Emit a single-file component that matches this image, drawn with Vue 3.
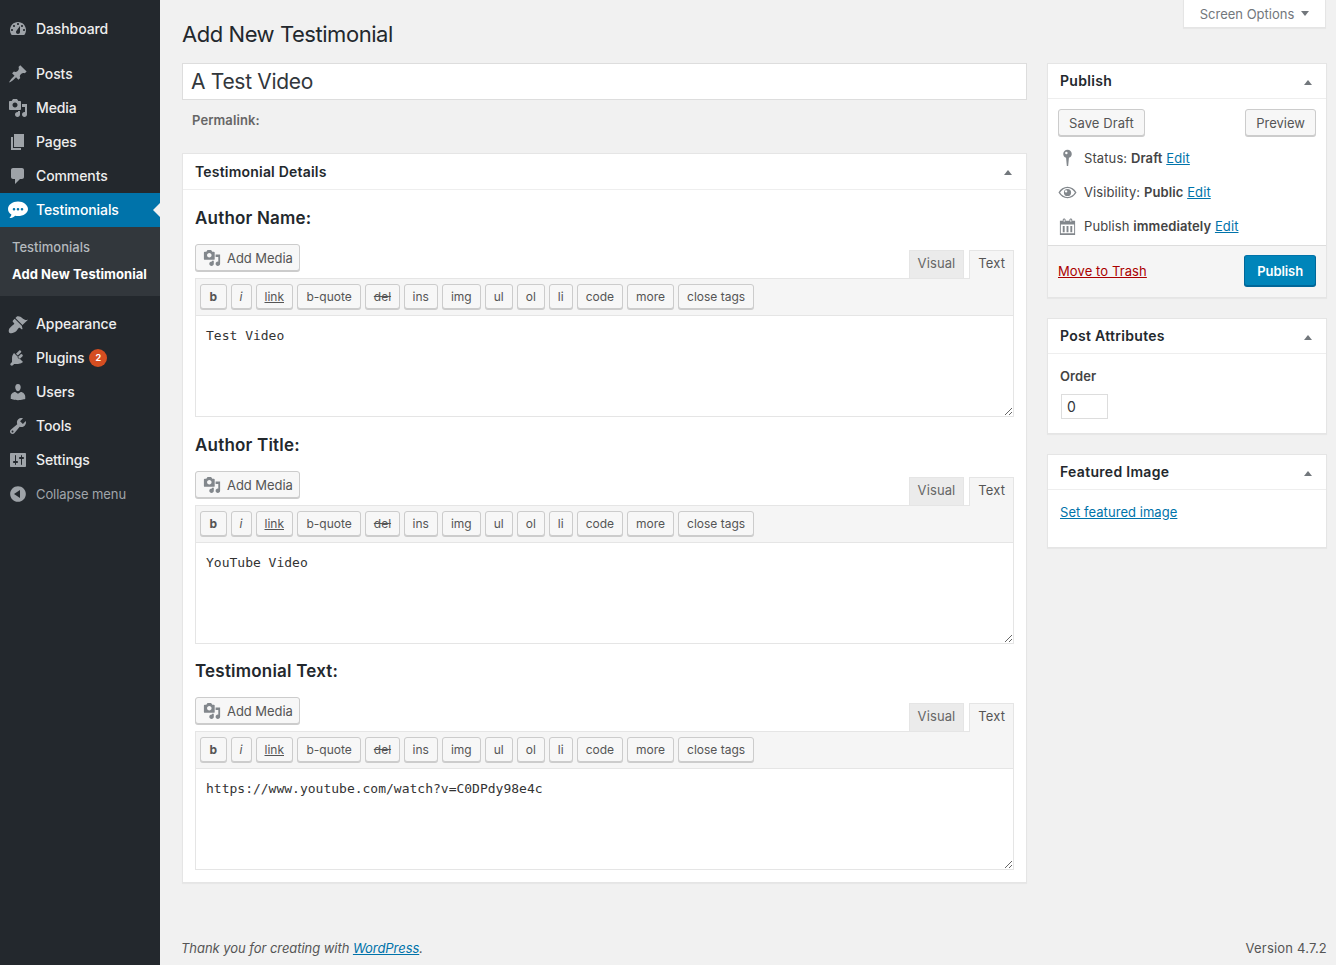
<template>
    <div class="page">
        <aside class="sidebar">
            <ul class="menu">
                <template v-for="item in menuItems" :key="item.label">
                    <li class="menu-item" :class="{ current: item.sub, 'after-gap': item.gap }">
                        <svg class="menu-icon" viewBox="0 0 20 20">
                            <path :d="item.icon" fill-rule="evenodd" />
                        </svg>
                        <span class="menu-label">{{ item.label }}</span>
                        <span v-if="item.badge" class="badge">{{ item.badge }}</span>
                        <span v-if="item.sub" class="arrow"></span>
                    </li>
                    <li v-if="item.sub" class="submenu">
                        <div v-for="sub in item.sub" :key="sub.label" class="sub-item" :class="{ active: sub.active }">{{ sub.label }}</div>
                    </li>
                </template>
            </ul>
            <div class="collapse">
                <svg class="menu-icon" viewBox="0 0 20 20">
                    <path :d="icons.collapse" fill-rule="evenodd" />
                </svg>
                <span>Collapse menu</span>
            </div>
        </aside>

        <main class="content">
            <div class="screen-options">
                <span>Screen Options</span>
                <span class="down"></span>
            </div>

            <h1>Add New Testimonial</h1>

            <div class="columns">
                <div class="left">
                    <input class="title-input" type="text" value="A Test Video" />
                    <div class="permalink">Permalink:</div>

                    <section class="box">
                        <header class="box-head">
                            <h2>Testimonial Details</h2>
                            <span class="up"></span>
                        </header>
                        <div class="details">
                            <div v-for="field in fields" :key="field.label" class="field">
                                <h3>{{ field.label }}</h3>
                                <div class="editor-top">
                                    <button class="btn add-media">
                                        <svg class="media-icon" viewBox="0 0 20 20">
                                            <path :d="icons.media" fill-rule="evenodd" />
                                        </svg>
                                        Add Media
                                    </button>
                                    <div class="tabs">
                                        <span class="tab">Visual</span>
                                        <span class="tab active">Text</span>
                                    </div>
                                </div>
                                <div class="toolbar">
                                    <button v-for="tag in tags" :key="tag.name" class="btn tag" :class="tag.cls">{{ tag.name }}</button>
                                </div>
                                <textarea class="editor-text" :value="field.value" spellcheck="false"></textarea>
                            </div>
                        </div>
                    </section>
                </div>

                <div class="right">
                    <section class="box publish">
                        <header class="box-head">
                            <h2>Publish</h2>
                            <span class="up"></span>
                        </header>
                        <div class="publish-buttons">
                            <button class="btn">Save Draft</button>
                            <button class="btn preview">Preview</button>
                        </div>
                        <div class="pub-row">
                            <svg class="pub-icon" viewBox="0 0 20 20"><path :d="icons.pin" fill-rule="evenodd" /></svg>
                            <span>Status: <b>Draft</b> <a>Edit</a></span>
                        </div>
                        <div class="pub-row">
                            <svg class="pub-icon" viewBox="0 0 20 20"><path :d="icons.eye" fill-rule="evenodd" /></svg>
                            <span>Visibility: <b>Public</b> <a>Edit</a></span>
                        </div>
                        <div class="pub-row">
                            <svg class="pub-icon" viewBox="0 0 20 20"><path :d="icons.calendar" fill-rule="evenodd" /></svg>
                            <span>Publish <b>immediately</b> <a>Edit</a></span>
                        </div>
                        <div class="pub-actions">
                            <a class="trash">Move to Trash</a>
                            <button class="btn primary">Publish</button>
                        </div>
                    </section>

                    <section class="box">
                        <header class="box-head">
                            <h2>Post Attributes</h2>
                            <span class="up"></span>
                        </header>
                        <div class="attrs">
                            <strong>Order</strong>
                            <input class="order" type="text" value="0" />
                        </div>
                    </section>

                    <section class="box">
                        <header class="box-head">
                            <h2>Featured Image</h2>
                            <span class="up"></span>
                        </header>
                        <div class="featured">
                            <a>Set featured image</a>
                        </div>
                    </section>
                </div>
            </div>

            <footer class="footer">
                <em>Thank you for creating with <a>WordPress</a>.</em>
                <span>Version 4.7.2</span>
            </footer>
        </main>
    </div>
</template>

<script setup>
const icons = {
    dashboard: 'M3.76 16h12.48c1.1-1.37 1.76-3.11 1.76-5 0-4.42-3.58-8-8-8s-8 3.58-8 8c0 1.89.66 3.63 1.76 5zM10 4c.55 0 1 .45 1 1s-.45 1-1 1-1-.45-1-1 .45-1 1-1zM6 6c.55 0 1 .45 1 1s-.45 1-1 1-1-.45-1-1 .45-1 1-1zm8 0c.55 0 1 .45 1 1s-.45 1-1 1-1-.45-1-1 .45-1 1-1zm-5.37 5.55L12 7v6c0 1.1-.9 2-2 2s-2-.9-2-2c0-.57.24-1.08.63-1.45zM4 10c.55 0 1 .45 1 1s-.45 1-1 1-1-.45-1-1 .45-1 1-1zm12 0c.55 0 1 .45 1 1s-.45 1-1 1-1-.45-1-1 .45-1 1-1z',
    posts: 'M10.44 3.02l1.82-1.82 6.36 6.35-1.83 1.82c-1.05-.68-2.48-.57-3.41.36l-.75.75c-.92.93-1.04 2.35-.35 3.41l-1.83 1.82-2.41-2.41-2.8 2.79c-.42.42-3.38 2.71-3.8 2.29s1.86-3.39 2.28-3.81l2.79-2.79L4.1 9.36l1.83-1.82c1.05.69 2.48.57 3.4-.36l.75-.75c.93-.92 1.05-2.35.36-3.41z',
    media: 'M13 11V4c0-.55-.45-1-1-1h-1.67L9 1H5L3.67 3H2c-.55 0-1 .45-1 1v7c0 .55.45 1 1 1h10c.55 0 1-.45 1-1zM7 4.500c1.38 0 2.500 1.120 2.500 2.500S8.380 9.500 7 9.500 4.500 8.380 4.500 7 5.620 4.500 7 4.500zM14 6h5v10.500c0 1.380-1.120 2.500-2.500 2.500S14 17.880 14 16.500s1.120-2.500 2.500-2.500c.17 0 .34.020.5.050V9h-3V6zm-4 8.050V13h2v3.500c0 1.380-1.120 2.500-2.500 2.500S7 17.880 7 16.500 8.120 14 9.500 14c.17 0 .34.020.5.050z',
    pages: 'M6 15V2h10v13H6zm-1 1h8v2H3V5h2v11z',
    comments: 'M5 2h9c1.100 0 2 .9 2 2v7c0 1.100-.9 2-2 2h-2l-5 5v-5H5c-1.100 0-2-.9-2-2V4c0-1.100.9-2 2-2z',
    chat: 'M10 1.500C4.500 1.500 0 4.900 0 9c0 2.300 1.300 4.200 3.400 5.600-.2 1.300-.9 2.500-2 3.500 2.300 0 4.300-.9 5.700-2.300.9.2 1.900.3 2.900.3 5.500 0 10-3.200 10-7.100S15.500 1.500 10 1.500zM6 7.900a1.300 1.300 0 1 1 0 2.600 1.300 1.300 0 0 1 0-2.600zm4 0a1.300 1.300 0 1 1 0 2.600 1.300 1.300 0 0 1 0-2.600zm4 0a1.300 1.300 0 1 1 0 2.600 1.300 1.300 0 0 1 0-2.600z',
    appearance: 'M14.480 11.060L7.410 3.990l1.500-1.500c.5-.56 2.300-.47 3.510.32 1.210.8 1.430 1.280 2.910 2.100 1.180.64 2.450 1.260 4.670.85l-5.520 5.300zM13.770 11.770L6.700 4.700 4.930 6.470c-.39.39-.39 1.020 0 1.410l1.060 1.060c.39.39.39 1.030 0 1.420-.6.6-1.430 1.110-2.210 1.690-.35.26-.7.53-1.010.84C1.430 13.710 0 16.330 1.300 18.700c2.370 1.300 5-.13 6.840-1.470.31-.31.580-.66.84-1.010.58-.78 1.090-1.610 1.690-2.210.39-.39 1.030-.39 1.420 0l1.060 1.060c.39.39 1.020.39 1.410 0z',
    plugins: 'M13.110 4.360L9.870 7.600 8 5.730l3.240-3.240c.35-.34 1.050-.2 1.560.32.520.51.660 1.210.310 1.550zM5.110 6.130l.910-1.120 9.010 9.010-1.190.84c-.710.710-2.630 1.160-3.820 1.160H6.140L4.900 17.260c-.59.59-1.540.59-2.120 0-.590-.58-.590-1.530 0-2.120l1.240-1.240v-3.880c0-1.130.46-3.050 1.170-3.770zM12.740 6.260L9.500 9.500l1.870 1.870 3.240-3.240c.35-.35.2-1.050-.32-1.560-.51-.52-1.210-.66-1.550-.31z',
    users: 'M10 9.250c-2.270 0-2.730-3.440-2.730-3.440C7 4.020 7.820 2 9.970 2c2.160 0 2.980 2.020 2.710 3.810 0 0-.41 3.440-2.680 3.440zm0 2.570L12.720 10c2.390 0 4.520 2.330 4.520 4.530v2.490s-3.650 1.130-7.240 1.130c-3.650 0-7.240-1.130-7.240-1.130v-2.490c0-2.250 1.940-4.480 4.470-4.480z',
    tools: 'M16.680 9.770c-1.340 1.340-3.300 1.670-4.950.99l-5.410 6.520c-.99.99-2.590.99-3.580 0s-.99-2.590 0-3.570l6.520-5.420c-.68-1.650-.35-3.610.99-4.950 1.280-1.280 3.120-1.620 4.720-1.060l-2.890 2.890 2.820 2.820 2.860-2.870c.53 1.580.18 3.390-1.080 4.650zM3.810 16.210c.4.39 1.030.39 1.420 0 .4-.4.4-1.030 0-1.430-.39-.39-1.020-.39-1.420 0-.39.4-.39 1.030 0 1.430z',
    settings: 'M18 16V4c0-.55-.45-1-1-1H3c-.55 0-1 .45-1 1v12c0 .55.45 1 1 1h14c.55 0 1-.45 1-1zM8 11h1c.55 0 1 .45 1 1s-.45 1-1 1H8v1.500c0 .28-.22.5-.5.5s-.5-.22-.5-.5V13H6c-.55 0-1-.45-1-1s.45-1 1-1h1V5.500c0-.28.22-.5.5-.5s.5.22.5.5V11zm5-2h-1c-.55 0-1-.45-1-1s.45-1 1-1h1V5.500c0-.28.22-.5.5-.5s.5.22.5.5V7h1c.55 0 1 .45 1 1s-.45 1-1 1h-1v5.500c0 .28-.22.5-.5.5s-.5-.22-.5-.5V9z',
    collapse: 'M10 2.160c4.330 0 7.840 3.510 7.840 7.840s-3.510 7.840-7.840 7.840S2.160 14.330 2.160 10 5.670 2.160 10 2.160zM12 14V6l-6 4z',
    pin: 'M10 .8C7.500.8 5.500 2.800 5.500 5.200c0 1.900 1.200 3.500 3 4.100L9.300 18h1.400l.8-8.700c1.800-.6 3-2.200 3-4.100C14.500 2.800 12.500.8 10 .8zM8.800 2.800a1.300 1.300 0 1 1 0 2.600 1.300 1.300 0 0 1 0-2.600z',
    eye: 'M10 4C6 4 2.600 6.400.5 10c2.100 3.600 5.500 6 9.500 6s7.400-2.400 9.500-6C17.400 6.400 14 4 10 4zM10 5.200c3.100 0 5.900 1.800 7.800 4.800-1.900 3-4.700 4.800-7.800 4.800S4.100 13 2.200 10C4.100 7 6.900 5.200 10 5.200zM10 6.200a3.800 3.800 0 1 0 0 7.600 3.800 3.800 0 0 0 0-7.600zM8.500 7.500a1.300 1.300 0 1 1 0 2.600 1.300 1.300 0 0 1 0-2.600z',
    calendar: 'M15 4h3v15H2V4h3V3c0-.83.67-1.500 1.500-1.500S8 2.170 8 3v1h4V3c0-.83.67-1.500 1.500-1.500S15 2.170 15 3v1zM6 5h1V3c0-.28-.22-.5-.5-.5S6 2.720 6 3v2zm7 0h1V3c0-.28-.22-.5-.5-.5S13 2.720 13 3v2zm4 12V8H3v9h14zM5 9.500h2V16H5V9.500zm4 0h2V16H9V9.500zm4 0h2V16h-2V9.500z'
}

const menuItems = [
    { label: 'Dashboard', icon: icons.dashboard },
    { label: 'Posts', icon: icons.posts, gap: true },
    { label: 'Media', icon: icons.media },
    { label: 'Pages', icon: icons.pages },
    { label: 'Comments', icon: icons.comments },
    {
        label: 'Testimonials',
        icon: icons.chat,
        sub: [
            { label: 'Testimonials' },
            { label: 'Add New Testimonial', active: true }
        ]
    },
    { label: 'Appearance', icon: icons.appearance, gap: true },
    { label: 'Plugins', icon: icons.plugins, badge: '2' },
    { label: 'Users', icon: icons.users },
    { label: 'Tools', icon: icons.tools },
    { label: 'Settings', icon: icons.settings }
]

const fields = [
    { label: 'Author Name:', value: 'Test Video' },
    { label: 'Author Title:', value: 'YouTube Video' },
    { label: 'Testimonial Text:', value: 'https://www.youtube.com/watch?v=C0DPdy98e4c' }
]

const tags = [
    { name: 'b', cls: 'tag-b' },
    { name: 'i', cls: 'tag-i' },
    { name: 'link', cls: 'tag-link' },
    { name: 'b-quote', cls: 'tag-quote' },
    { name: 'del', cls: 'tag-del' },
    { name: 'ins' },
    { name: 'img' },
    { name: 'ul' },
    { name: 'ol' },
    { name: 'li' },
    { name: 'code' },
    { name: 'more' },
    { name: 'close tags' }
]
</script>

<style scoped>
.page {
    display: flex;
    min-height: 965px;
    font-family: Inter, 'Liberation Sans', sans-serif;
    font-size: 13px;
    letter-spacing: 0.1px;
    color: #444;
}

.sidebar {
    width: 160px;
    flex-shrink: 0;
    background: #23282d;
    padding-top: 12px;
    box-sizing: border-box;
}

.menu {
    list-style: none;
    margin: 0;
    padding: 0;
}

.menu-item {
    position: relative;
    display: flex;
    align-items: center;
    height: 34px;
    font-size: 14px;
    font-weight: 500;
    letter-spacing: -0.1px;
    color: #eee;
}

.menu-label {
    margin-bottom: 2px;
}

.menu-item.after-gap {
    margin-top: 11px;
}

.menu-item.current {
    background: #0073aa;
    color: #fff;
}

.submenu {
    background: #32373c;
    padding: 7px 0 8px 12px;
}

.sub-item {
    height: 27px;
    line-height: 27px;
    font-weight: 500;
    letter-spacing: 0;
    color: #b4b9be;
}

.sub-item.active {
    font-weight: 700;
    letter-spacing: 0.05px;
    color: #fff;
}

.menu-icon {
    width: 20px;
    height: 20px;
    margin: 0 8px;
    fill: #9ea3a8;
    flex-shrink: 0;
}

.menu-item.current .menu-icon {
    fill: #fff;
}

.badge {
    margin-left: 5px;
    width: 18px;
    height: 18px;
    border-radius: 50%;
    background: #d54e21;
    color: #fff;
    font-size: 9px;
    font-weight: 700;
    text-align: center;
    line-height: 18px;
}

.arrow {
    position: absolute;
    right: 0;
    top: 10px;
    border: 7px solid transparent;
    border-right-color: #f1f1f1;
    border-left-width: 0;
}

.collapse {
    display: flex;
    align-items: center;
    height: 34px;
    font-size: 13px;
    letter-spacing: -0.1px;
    color: #a0a5aa;
}

.content {
    position: relative;
    flex: 1;
    min-width: 0;
    display: flex;
    flex-direction: column;
    padding: 0 9px 0 22px;
}

.screen-options {
    position: absolute;
    top: 0;
    right: 10px;
    width: 143px;
    height: 28px;
    box-sizing: border-box;
    background: #fff;
    border: 1px solid #e5e5e5;
    border-top: none;
    box-shadow: 0 1px 1px rgba(0, 0, 0, 0.04);
    display: flex;
    align-items: center;
    justify-content: center;
    gap: 7px;
    letter-spacing: 0;
    color: #72777c;
}

.down {
    border: 4px solid transparent;
    border-top: 5px solid #72777c;
    border-bottom: none;
    margin-top: -1px;
}

.up {
    border: 4px solid transparent;
    border-bottom: 5px solid #72777c;
    border-top: none;
    margin-top: 2px;
}

h1 {
    margin: 0;
    padding-top: 19px;
    height: 30px;
    font-size: 22px;
    line-height: 30px;
    font-weight: 400;
    letter-spacing: -0.45px;
    color: #23282d;
}

.columns {
    display: flex;
    gap: 20px;
    margin-top: 14px;
    align-items: flex-start;
}

.left {
    width: 845px;
    flex-shrink: 0;
}

.right {
    width: 280px;
    display: flex;
    flex-direction: column;
    gap: 20px;
}

.title-input {
    display: block;
    width: 100%;
    height: 37px;
    box-sizing: border-box;
    padding: 0 8px;
    font-family: inherit;
    font-size: 21px;
    letter-spacing: -0.3px;
    color: #32373c;
    border: 1px solid #ddd;
    background: #fff;
    outline: none;
}

.permalink {
    padding-left: 10px;
    margin-top: 12px;
    height: 17px;
    line-height: 17px;
    font-weight: 600;
    color: #666;
}

.box {
    background: #fff;
    border: 1px solid #e5e5e5;
    box-shadow: 0 1px 1px rgba(0, 0, 0, 0.04);
}

.left .box {
    margin-top: 24px;
}

.box-head {
    display: flex;
    align-items: center;
    justify-content: space-between;
    height: 35px;
    padding: 0 14px 0 12px;
    border-bottom: 1px solid #eee;
}

.right .box-head {
    height: 34px;
}

.right .box-head h2 {
    margin-bottom: 2px;
    letter-spacing: 0.3px;
}

.box-head h2 {
    margin: 0;
    font-size: 14px;
    font-weight: 600;
    letter-spacing: 0.2px;
    color: #23282d;
}

.details {
    padding: 0 12px 12px;
}

.field h3 {
    margin: 0;
    height: 54px;
    line-height: 56px;
    font-size: 17px;
    font-weight: 600;
    letter-spacing: 0.2px;
    color: #23282d;
}

.field:last-child h3 {
    height: 53px;
    line-height: 54px;
}

.editor-top {
    display: flex;
    justify-content: space-between;
    align-items: flex-end;
    height: 34px;
}

.btn {
    height: 27px;
    padding: 0 10px;
    font-family: inherit;
    font-size: 13px;
    letter-spacing: 0.1px;
    color: #555;
    background: #f7f7f7;
    border: 1px solid #ccc;
    border-radius: 3px;
    box-shadow: 0 1px 0 #ccc;
}

.add-media {
    display: flex;
    align-items: center;
    align-self: flex-start;
    gap: 6px;
    padding: 1px 6px 0 7px;
    letter-spacing: -0.05px;
}

.media-icon {
    width: 18px;
    height: 18px;
    fill: #82878c;
}

.tabs {
    display: flex;
    gap: 5px;
    position: relative;
    z-index: 1;
}

.tab {
    height: 28px;
    line-height: 25px;
    box-sizing: border-box;
    padding: 0 8px;
    background: #ebebeb;
    border: 1px solid #e5e5e5;
    border-bottom: none;
    color: #666;
}

.tab.active {
    height: 29px;
    margin-bottom: -1px;
    background: #f5f5f5;
    color: #555;
}

.toolbar {
    display: flex;
    gap: 4px;
    height: 38px;
    box-sizing: border-box;
    align-items: center;
    padding: 0 4px;
    background: #f5f5f5;
    border: 1px solid #e5e5e5;
}

.tag {
    height: 25px;
    margin-bottom: 1px;
    padding: 0 8px;
    font-size: 12px;
    letter-spacing: 0;
}

.tag-b {
    padding: 0 8.5px;
    font-weight: 700;
}

.tag-i {
    font-style: italic;
}

.tag-link {
    text-decoration: underline;
}

.tag-quote {
    padding: 0 8.5px;
}

.tag-del {
    padding: 0 7.5px;
    text-decoration: line-through;
}

.editor-text {
    display: block;
    width: 100%;
    height: 101px;
    box-sizing: border-box;
    margin: 0;
    padding: 10px;
    font-family: 'DejaVu Sans Mono', monospace;
    font-size: 13px;
    letter-spacing: 0;
    line-height: 19px;
    color: #333;
    background: #fff;
    border: 1px solid #e5e5e5;
    border-top: none;
    outline: none;
}

.publish-buttons {
    display: flex;
    justify-content: space-between;
    padding: 10px 10px 5px;
}

.preview {
    letter-spacing: 0;
}

.pub-row {
    display: flex;
    align-items: center;
    gap: 7px;
    height: 34px;
    padding-left: 10px;
}

.pub-row b {
    font-weight: 600;
}

.pub-icon {
    width: 19px;
    height: 19px;
    fill: #82878c;
}

a {
    color: #0073aa;
    text-decoration: underline;
}

.pub-actions {
    display: flex;
    align-items: center;
    justify-content: space-between;
    height: 51px;
    margin-top: 2px;
    padding: 0 10px;
    background: #f5f5f5;
    border-top: 1px solid #ddd;
}

.trash {
    margin-bottom: 2px;
    color: #a00;
}

.primary {
    height: 31px;
    padding: 0 12px;
    margin-bottom: 2px;
    font-weight: 600;
    letter-spacing: -0.1px;
    color: #fff;
    background: #0085ba;
    border-color: #0073aa #006799 #006799;
    box-shadow: 0 1px 0 #006799;
}

.attrs {
    padding: 14px 12px 14px;
}

.attrs strong {
    display: block;
    font-weight: 600;
    line-height: 16px;
}

.order {
    display: block;
    width: 47px;
    height: 25px;
    box-sizing: border-box;
    margin: 10px 0 0 1px;
    padding: 0 5px;
    font-family: inherit;
    font-size: 14px;
    color: #32373c;
    border: 1px solid #ddd;
    outline: none;
}

.featured {
    padding: 14px 12px 26px;
    line-height: 17px;
    letter-spacing: 0.05px;
}

.footer {
    margin-top: auto;
    display: flex;
    justify-content: space-between;
    margin-left: -1px;
    padding-bottom: 9px;
    line-height: 16px;
    color: #555;
}

.footer em {
    letter-spacing: -0.05px;
}

.footer span {
    letter-spacing: 0.2px;
}
</style>

<style>
html, body {
    background: #f1f1f1;
}
</style>
